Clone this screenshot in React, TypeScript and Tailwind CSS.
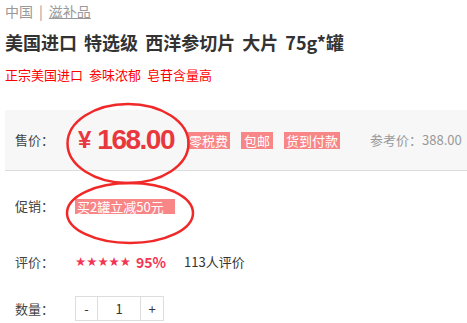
const cjk = { fontFamily: '"Noto Sans CJK SC", "Liberation Sans", sans-serif' };

function Label({ text }: { text: string }) {
  return <div className="w-[60px] shrink-0 text-[13px] text-[#444]">{text}</div>;
}

function Tag({ text, className = "" }: { text: string; className?: string }) {
  return (
    <span className={`h-[17px] bg-[#f88686] px-[2px] text-[13px] leading-[17px] text-white ${className}`}>
      {text}
    </span>
  );
}

export default function App() {
  return (
    <div className="relative h-[323px] w-[467px] overflow-hidden bg-white" style={cjk}>
      <div className="flex pl-[5px] pt-[1px] text-[14px] leading-[20px] text-[#999]">
        <span>中国</span>
        <span className="mx-[6px]">|</span>
        <span className="underline decoration-[#999]">滋补品</span>
      </div>

      <h1 className="mt-[9px] whitespace-nowrap pl-[5px] text-[18px] font-bold leading-[24px] text-[#333] [word-spacing:3px]">
        美国进口 特选级 西洋参切片 大片 75g*罐
      </h1>

      <div className="mt-[11px] flex gap-[6px] pl-[5px] text-[13px] leading-[20px] text-[#f00]">
        <span>正宗美国进口</span>
        <span>参味浓郁</span>
        <span>皂苷含量高</span>
      </div>

      <div className="ml-[5px] mt-[25px] flex h-[61px] w-[520px] items-center whitespace-nowrap border-b border-[#ddd] bg-[#f7f7f7] pl-[10px]">
        <Label text="售价：" />
        <div className="ml-[3px] flex items-center font-bold text-[#e8383d]" style={{ fontFamily: '"Liberation Sans", sans-serif' }}>
          <span className="mr-[6px] text-[24px]">¥</span>
          <span className="text-[28px] tracking-[-1.5px]">168.00</span>
        </div>
        <div className="ml-[13px] flex gap-[11px]">
          <Tag text="零税费" />
          <Tag text="包邮" className="px-[3px]" />
          <Tag text="货到付款" />
        </div>
        <div className="ml-[30px] text-[13px] text-[#999]">参考价：388.00</div>
      </div>

      <div className="ml-[5px] mt-[20px] flex h-[30px] items-center pl-[10px]">
        <Label text="促销：" />
        <span className="h-[15px] whitespace-nowrap bg-[#f88686] pl-[2px] pr-[11px] text-[13px] leading-[15px] text-white">
          买2罐立减50元
        </span>
      </div>

      <div className="ml-[5px] mt-[26px] flex h-[30px] items-center pl-[10px]">
        <Label text="评价：" />
        <span className="text-[12.5px] text-[#f23553]" style={{ fontFamily: '"DejaVu Sans", sans-serif' }}>
          ★★★★★
        </span>
        <span className="ml-[5px] text-[14px] font-bold text-[#f23553]">95%</span>
        <span className="ml-[18px] text-[13px] text-[#333]">113人评价</span>
      </div>

      <div className="ml-[5px] mt-[19px] flex h-[25px] items-center pl-[10px]">
        <Label text="数量：" />
        <div className="flex h-[25px] border border-[#ddd] text-[13px] text-[#333]">
          <div className="flex w-[22px] items-center justify-center border-r border-[#ddd]">-</div>
          <div className="flex w-[43px] items-center justify-center border-r border-[#ddd]">1</div>
          <div className="flex w-[22px] items-center justify-center">+</div>
        </div>
      </div>

      <svg className="pointer-events-none absolute left-0 top-0" width="467" height="323">
        <ellipse cx="128" cy="143.5" rx="60.5" ry="39.5" fill="none" stroke="#f02828" strokeWidth="2.5" />
        <ellipse cx="130" cy="213" rx="63" ry="30" fill="none" stroke="#f02828" strokeWidth="2.5" />
      </svg>
    </div>
  );
}
